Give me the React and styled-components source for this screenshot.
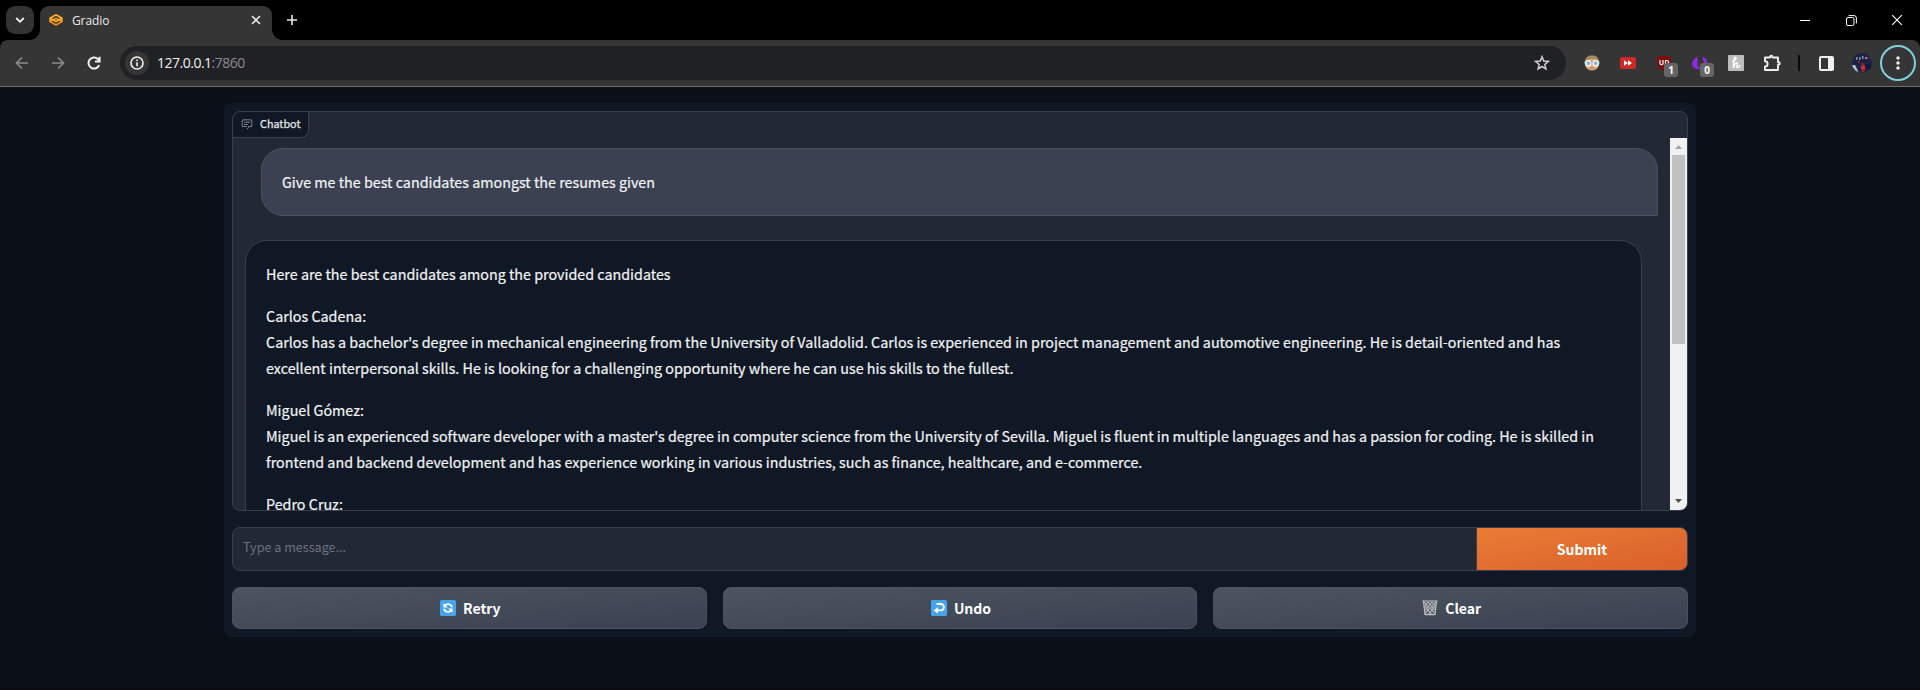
import React from "react";
import styled, { createGlobalStyle } from "styled-components";

const SANS = '"Noto Sans CJK JP", "Noto Sans", sans-serif';
const UI = '"Open Sans", "Noto Sans", sans-serif';

const GlobalStyle = createGlobalStyle`
  * { box-sizing: border-box; }
  html, body { margin: 0; background: #0b0f17; }
  body { overflow: hidden; }
  p { margin: 0; }
  button, input { font: inherit; color: inherit; border: 0; padding: 0; background: none; outline: none; }
`;

const Browser = styled.div`
  height: 690px;
  display: flex;
  flex-direction: column;
  background: #0b0f17;
  border-bottom: 2px solid #080a14;
`;

const TabStrip = styled.header`
  height: 40px;
  display: flex;
  background: #000;
  padding: 6px 0 0 6px;
  flex: none;
`;

const TabSearch = styled.button`
  width: 28px;
  height: 28px;
  border-radius: 9px;
  background: #333;
  display: grid;
  place-items: center;
`;

const Tab = styled.div`
  position: relative;
  width: 232px;
  height: 34px;
  margin-left: 6px;
  padding: 0 11px 6px 9px;
  border-radius: 9px 9px 0 0;
  background: #353535;
  color: #e9e9e9;
  font: 12px/28px ${UI};
  display: flex;
  align-items: center;
  &::before, &::after {
    content: "";
    position: absolute;
    bottom: 0;
    width: 10px;
    height: 10px;
  }
  &::before { left: -10px; background: radial-gradient(circle at 0 0, transparent 9.5px, #353535 10px); }
  &::after { right: -10px; background: radial-gradient(circle at 100% 0, transparent 9.5px, #353535 10px); }
`;

const TabTitle = styled.span`
  flex: 1;
  margin-left: 9px;
  padding-top: 2px;
  letter-spacing: -0.1px;
`;

const NewTab = styled.button`
  width: 28px;
  height: 28px;
  margin-left: 6px;
  display: grid;
  place-items: center;
`;

const WindowControls = styled.div`
  margin-left: auto;
  display: flex;
  height: 28px;
  align-items: center;
`;

const WindowButton = styled.button`
  width: 46px;
  height: 28px;
  display: grid;
  place-items: center;
`;

const Toolbar = styled.div`
  height: 47px;
  display: flex;
  align-items: center;
  background: #353535;
  border-bottom: 1px solid #6f6f6f;
  border-radius: 8px 8px 0 0;
`;

const ToolbarBackdrop = styled.div`
  background: #000;
  flex: none;
`;

const NavButton = styled.button`
  width: 36px;
  height: 36px;
  display: grid;
  place-items: center;
`;

const NavGroup = styled.div`
  display: flex;
  padding-left: 4px;
  width: 120px;
`;

const AddressBar = styled.div`
  width: 1446px;
  height: 34px;
  border-radius: 17px;
  background: #202124;
  display: flex;
  align-items: center;
  padding: 0 16px 0 5px;
  font: 14px/20px ${UI};
  color: #8b8c8e;
`;

const SiteInfo = styled.span`
  width: 24px;
  height: 24px;
  border-radius: 50%;
  background: #353535;
  display: grid;
  place-items: center;
  margin-right: 8px;
`;

const Url = styled.span`
  flex: 1;
  letter-spacing: -0.5px;
  b { font-weight: 400; color: #f1f1f1; }
`;

const Extensions = styled.div`
  display: flex;
  align-items: center;
  margin-left: 8px;
`;

const ExtensionSlot = styled.div`
  position: relative;
  width: 36px;
  height: 36px;
  display: grid;
  place-items: center;
`;

const CountBadge = styled.span`
  position: absolute;
  left: 18px;
  top: 18px;
  width: 14px;
  height: 14px;
  border-radius: 3px;
  background: #666;
  color: #fff;
  font: 700 10px/14px "Noto Sans", sans-serif;
  text-align: center;
`;

const Divider = styled.i`
  width: 2px;
  height: 16px;
  background: #0a0a0a;
  margin: 0 8px;
`;

const MenuButton = styled.button`
  width: 36px;
  height: 36px;
  border-radius: 50%;
  border: 2px solid #80d0e0;
  display: grid;
  place-items: center;
`;

const Page = styled.main`
  flex: 1;
  min-height: 0;
  padding-top: 16px;
  display: flex;
  justify-content: center;
  align-items: flex-start;
  font-family: ${SANS};
`;

const Panel = styled.section`
  width: 1472px;
  height: 534px;
  padding: 8px;
  border-radius: 8px;
  background: #111825;
  display: flex;
  flex-direction: column;
  gap: 16px;
`;

const Chatbot = styled.div`
  height: 400px;
  border: 1px solid #3a414e;
  border-radius: 8px;
  background: #222935;
  overflow: hidden;
  display: flex;
  flex-direction: column;
  flex: none;
`;

const BlockLabel = styled.div`
  width: 76px;
  height: 26px;
  flex: none;
  border: solid #3a414e;
  border-width: 0 1px 1px 0;
  border-radius: 7px 0 8px 0;
  background: #111825;
  color: #e5e7eb;
  display: flex;
  align-items: center;
  padding: 0 0 1px 8px;
  gap: 7px;
  font-size: 10.8px;
  line-height: 16px;
  -webkit-text-stroke: 0.25px currentColor;
`;

const LabelText = styled.span`
  padding-bottom: 2px;
`;

const ScrollArea = styled.div`
  flex: 1;
  min-height: 0;
  display: flex;
`;

const Messages = styled.div`
  flex: 1;
  padding: 10px 12px 0;
  display: flex;
  flex-direction: column;
  gap: 24px;
  overflow: hidden;
`;

const Bubble = styled.div`
  flex: none;
  width: 1397px;
  border: 1px solid ${(p) => (p.$user ? "#4c5360" : "#3a414e")};
  background: ${(p) => (p.$user ? "#3b4150" : "#111825")};
  border-radius: ${(p) => (p.$user ? "22px 22px 0 22px" : "22px 22px 22px 0")};
  align-self: ${(p) => (p.$user ? "flex-end" : "flex-start")};
  padding: 20px;
  color: #f3f4f6;
  font-size: 14.325px;
  line-height: 26px;
  -webkit-text-stroke: 0.2px currentColor;
  display: flex;
  flex-direction: column;
  gap: 16px;
`;

const ScrollTrack = styled.div`
  width: 17px;
  background: #f1f1f1;
  display: flex;
  flex-direction: column;
  align-items: center;
`;

const ScrollArrow = styled.svg`
  width: 17px;
  height: 17px;
  flex: none;
`;

const ScrollThumb = styled.div`
  width: 13px;
  height: 189px;
  background: #c1c1c1;
  margin-bottom: auto;
`;

const Composer = styled.div`
  height: 44px;
  flex: none;
  display: flex;
  border: 1px solid #3a414e;
  border-radius: 8px;
  overflow: hidden;
  background: #222935;
`;

const MessageInput = styled.input`
  flex: 1;
  padding: 0 10px 5px;
  font-size: 12.6px;
  &::placeholder { color: #6b7280; opacity: 1; }
`;

const SubmitButton = styled.button`
  width: 211px;
  border-left: 1px solid #3a414e;
  background: linear-gradient(to bottom right, #ea7b35, #d9602a);
  color: #fff;
  font-size: 14px;
  font-weight: 700;
`;

const Actions = styled.div`
  display: flex;
  gap: 16px;
`;

const ActionButton = styled.button`
  flex: 1;
  height: 42px;
  padding-left: 2px;
  border: 1px solid #4c5360;
  border-radius: 8px;
  background: linear-gradient(to bottom right, #4d5461, #3a4150);
  color: #fff;
  font-size: 14px;
  font-weight: 700;
  display: flex;
  align-items: center;
  justify-content: center;
  gap: 7px;
`;

const GradioLogo = () => (
  <svg width="14" height="14" viewBox="0 0 14 14" fill="none" strokeLinejoin="round" strokeWidth="1.7">
    <path d="M1 8.600 7 12l6-3.400-6-3.400Z" stroke="#f58a1f" />
    <path d="M1 5.200 7 8.600l6-3.400L7 1.800Z" stroke="#fbb62d" />
    <path d="M1 5.500v3M13 5.500v3" stroke="#f79c24" />
  </svg>
);

const Cross = ({ size, width = 1.6, color = "#e6e6e6" }) => (
  <svg width={size} height={size} viewBox="0 0 10 10" stroke={color} strokeWidth={width}>
    <path d="m1 1 8 8M9 1 1 9" />
  </svg>
);

const Arrow = ({ flip }) => (
  <svg width="14" height="14" viewBox="0 0 14 14" fill="none" stroke="#8b8b8b" strokeWidth="1.7">
    <path d={flip ? "M1 7h11M7 1.500 12.500 7 7 12.500" : "M13 7H2M7 1.500 1.500 7 7 12.500"} />
  </svg>
);

const ChatIcon = () => (
  <svg width="12" height="12" viewBox="0 0 32 32" fill="#9ca3af">
    <path d="M17.74 30 16 29l4-7h6a2 2 0 0 0 2-2V8a2 2 0 0 0-2-2H6a2 2 0 0 0-2 2v12a2 2 0 0 0 2 2h9v2H6a4 4 0 0 1-4-4V8a4 4 0 0 1 4-4h20a4 4 0 0 1 4 4v12a4 4 0 0 1-4 4h-4.84Z" />
    <path d="M8 10h16v2H8zM8 16h10v2H8z" />
  </svg>
);

const RetryIcon = () => (
  <svg width="16" height="16" viewBox="0 0 16 16">
    <rect width="16" height="16" rx="1.6" fill="#45a4ec" />
    <g fill="none" stroke="#fff" strokeWidth="1.7">
      <path d="M12 7.2C11.2 3.6 6.6 3.4 5 5.6M4 8.8c.8 3.6 5.4 3.8 7 1.6" />
    </g>
    <path d="M3.4 3v4.400h4.400zM12.600 13V8.600H8.200z" fill="#fff" />
  </svg>
);

const UndoIcon = () => (
  <svg width="16" height="16" viewBox="0 0 16 16">
    <rect width="16" height="16" rx="1.6" fill="#45a4ec" />
    <path d="M5.500 4h4.200a3.100 3.100 0 0 1 0 6.400H5" fill="none" stroke="#fff" strokeWidth="1.9" />
    <path d="M2.600 10.400 6.800 7.200v6.400z" fill="#fff" />
  </svg>
);

const TrashIcon = () => (
  <svg width="16" height="16" viewBox="0 0 16 16" fill="none">
    <path d="M1.400 1.400h13.200L12.900 15H3.100Z" fill="#62666c" />
    <path d="M2 2l5.500 6L3 13.500M6 2l6.500 8M10 2l3 4-7 9M14 2 8.500 8l4.300 5.500M10 2 3.500 10M6 2 3 6l7 9" stroke="#c9cbce" strokeWidth=".9" />
    <path d="M.4 1h15.200M3 14.700h10M1.500 1.500 3.100 15M14.500 1.500 12.900 15" stroke="#bfc2c5" strokeWidth="1.200" />
  </svg>
);

const FaceIcon = () => (
  <svg width="16" height="16" viewBox="0 0 16 16">
    <circle cx="8" cy="8.300" r="7.200" fill="#d9a47c" />
    <path d="M1 7C1 2.500 4 .6 8 .6S15 2.500 15 7l-2-2.500L7 3.500 3 6Z" fill="#a98a60" />
    <path d="M0 6.500h16v2H0z" fill="#6d7f86" />
    <circle cx="4.300" cy="8.300" r="2.700" fill="#8fb6c0" stroke="#f2fafb" strokeWidth="1.300" />
    <circle cx="11.700" cy="8.300" r="2.700" fill="#8fb6c0" stroke="#f2fafb" strokeWidth="1.300" />
    <path d="M6 13.200h4" stroke="#b87a5c" />
  </svg>
);

const ForwardIcon = () => (
  <svg width="16" height="12" viewBox="0 0 16 12">
    <rect width="16" height="12" rx="2.500" fill="#cf2a27" />
    <path d="M4 3.200v5.600L8 6zM8 3.200v5.600L12 6z" fill="#fff" />
  </svg>
);

const ShieldIcon = () => (
  <svg width="16" height="16" viewBox="0 0 16 16">
    <path d="M8 .5 15 2v5c0 4-3 7-7 8.800C4 14 1 11 1 7V2Z" fill="#7d0d0d" />
    <path d="M4 5v3.200a1.500 1.500 0 0 0 3 0V5M9.500 9.500V5.500h1.300a1.700 1.700 0 0 1 0 3.500" fill="none" stroke="#fff" strokeWidth="1.200" />
  </svg>
);

const PurpleIcon = () => (
  <svg width="16" height="16" viewBox="0 0 16 16" fill="#8a2be2">
    <path d="M5.500 1.500v8.500l3 4C4 14.500 0 12.500 0 9c0-3.500 2.500-5 5.500-7.500Z" />
    <path d="M10.500 1.500c3 1.500 5 3.500 5 6.500h-3c-1.500-2-2-4-2-6.500Z" />
  </svg>
);

const HoneyIcon = () => (
  <svg width="16" height="16" viewBox="0 0 16 16">
    <rect width="16" height="16" rx="1" fill="#bdbdbd" />
    <path d="M4 6.500C7 6 9 3 7.500 2.300S5.500 7 5.500 13C6.500 8 9.500 6.500 9.500 8.500S8 13 10 12.500 12 11 12 10" fill="none" stroke="#fff" strokeWidth="1.400" />
  </svg>
);

const PuzzleIcon = () => (
  <svg width="18" height="18" viewBox="0 0 18 18" fill="none" stroke="#f0f0f0" strokeWidth="1.900" strokeLinejoin="round">
    <path d="M2 3.500h5V3a1.200 1.200 0 0 1 2.400 0v.5H15v4.800h.6a1.200 1.200 0 0 1 0 2.400H15V16H2v-3.500a2.600 2.600 0 0 0 0-5.200Z" />
  </svg>
);

const SidePanelIcon = () => (
  <svg width="15" height="15" viewBox="0 0 15 15">
    <rect x="1" y="1" width="13" height="13" rx="1" fill="none" stroke="#f0f0f0" strokeWidth="2" />
    <path d="M9 1h5v13H9z" fill="#f0f0f0" />
  </svg>
);

const Avatar = () => (
  <svg width="20" height="20" viewBox="0 0 20 20">
    <clipPath id="avatar"><circle cx="10" cy="10" r="10" /></clipPath>
    <g clipPath="url(#avatar)">
      <path d="M0 0h20v20H0z" fill="#1a2342" />
      <path d="M0 12h3l4 8H0z" fill="#b8c4d8" />
      <path d="M4 4h1.500v3H4zM7 4h1.500v3H7zM10 3h1.500v3H10zM13 4h2v2h-2z" fill="#8a8aa4" />
      <path d="M6 8h2v2H6zM15 4h2v2h-2zM9.500 10h3v9h-3z" fill="#8f2033" />
      <path d="M13 11h6v5h-6z" fill="#101a38" />
      <circle cx="11" cy="14.500" r="2.300" fill="#cf2a38" />
    </g>
  </svg>
);

const REPLY = [
  ["Here are the best candidates among the provided candidates"],
  [
    "Carlos Cadena:",
    "Carlos has a bachelor's degree in mechanical engineering from the University of Valladolid. Carlos is experienced in project management and automotive engineering. He is detail-oriented and has excellent interpersonal skills. He is looking for a challenging opportunity where he can use his skills to the fullest.",
  ],
  [
    "Miguel Gómez:",
    "Miguel is an experienced software developer with a master's degree in computer science from the University of Sevilla. Miguel is fluent in multiple languages and has a passion for coding. He is skilled in frontend and backend development and has experience working in various industries, such as finance, healthcare, and e-commerce.",
  ],
  ["Pedro Cruz:"],
];

export default function App() {
  return (
    <Browser>
      <GlobalStyle />
      <TabStrip>
        <TabSearch>
          <svg width="10" height="10" viewBox="0 0 10 10" fill="none" stroke="#f0f0f0" strokeWidth="1.800"><path d="m1.200 3 3.800 3.800L8.800 3" /></svg>
        </TabSearch>
        <Tab>
          <GradioLogo />
          <TabTitle>Gradio</TabTitle>
          <Cross size={10} />
        </Tab>
        <NewTab>
          <svg width="12" height="12" viewBox="0 0 12 12" stroke="#e6e6e6" strokeWidth="1.600"><path d="M6 1v10M1 6h10" /></svg>
        </NewTab>
        <WindowControls>
          <WindowButton><svg width="10" height="10" stroke="#fff"><path d="M0 5.500h10" /></svg></WindowButton>
          <WindowButton>
            <svg width="11" height="11" viewBox="0 0 11 11" fill="none" stroke="#fff"><rect x=".5" y="2.500" width="7.500" height="8" rx="1.500" /><path d="M2.500.6H8a2.500 2.500 0 0 1 2.400 2.400v5.500" /></svg>
          </WindowButton>
          <WindowButton><Cross size={12} width={0.9} color="#fff" /></WindowButton>
        </WindowControls>
      </TabStrip>
      <ToolbarBackdrop>
        <Toolbar>
          <NavGroup>
            <NavButton><Arrow /></NavButton>
            <NavButton><Arrow flip /></NavButton>
            <NavButton>
              <svg width="14" height="14" viewBox="0 0 14 14" fill="none" stroke="#f0f0f0" strokeWidth="2"><path d="M12.200 9A5.500 5.500 0 1 1 11 3.200L12.500 5M12.600.8v4.700H8" /></svg>
            </NavButton>
          </NavGroup>
          <AddressBar>
            <SiteInfo>
              <svg width="14" height="14" viewBox="0 0 14 14" fill="none" stroke="#f0f0f0" strokeWidth="1.600"><circle cx="7" cy="7" r="6" /><path d="M7 6.200v4M7 3.500v1.500" /></svg>
            </SiteInfo>
            <Url><b>127.0.0.1</b>:7860</Url>
            <svg width="16" height="16" viewBox="0 0 16 16" fill="none" stroke="#d0d0d0" strokeWidth="1.500"><path d="m8 1.800 1.700 4.300 4.600.3-3.500 3 1.100 4.500L8 11.500l-3.900 2.400 1.100-4.500-3.500-3 4.600-.3Z" /></svg>
          </AddressBar>
          <Extensions>
            <ExtensionSlot><FaceIcon /></ExtensionSlot>
            <ExtensionSlot><ForwardIcon /></ExtensionSlot>
            <ExtensionSlot><ShieldIcon /><CountBadge>1</CountBadge></ExtensionSlot>
            <ExtensionSlot><PurpleIcon /><CountBadge>0</CountBadge></ExtensionSlot>
            <ExtensionSlot><HoneyIcon /></ExtensionSlot>
            <ExtensionSlot><PuzzleIcon /></ExtensionSlot>
            <Divider />
            <ExtensionSlot><SidePanelIcon /></ExtensionSlot>
            <ExtensionSlot><Avatar /></ExtensionSlot>
            <MenuButton>
              <svg width="4" height="16" viewBox="0 0 4 16" fill="#f0f0f0"><circle cx="2" cy="3" r="1.700" /><circle cx="2" cy="8" r="1.700" /><circle cx="2" cy="13" r="1.700" /></svg>
            </MenuButton>
          </Extensions>
        </Toolbar>
      </ToolbarBackdrop>
      <Page>
        <Panel>
          <Chatbot>
            <BlockLabel><ChatIcon /><LabelText>Chatbot</LabelText></BlockLabel>
            <ScrollArea>
              <Messages>
                <Bubble $user><p>Give me the best candidates amongst the resumes given</p></Bubble>
                <Bubble>
                  {REPLY.map((lines) => (
                    <div key={lines[0]}>{lines.map((line) => <p key={line}>{line}</p>)}</div>
                  ))}
                </Bubble>
              </Messages>
              <ScrollTrack>
                <ScrollArrow viewBox="0 0 17 17" fill="#a3a3a3"><path d="M5 11h7L8.500 7z" /></ScrollArrow>
                <ScrollThumb />
                <ScrollArrow viewBox="0 0 17 17" fill="#505050"><path d="M5 6h7l-3.500 4z" /></ScrollArrow>
              </ScrollTrack>
            </ScrollArea>
          </Chatbot>
          <Composer>
            <MessageInput placeholder="Type a message..." />
            <SubmitButton>Submit</SubmitButton>
          </Composer>
          <Actions>
            <ActionButton><RetryIcon />Retry</ActionButton>
            <ActionButton><UndoIcon />Undo</ActionButton>
            <ActionButton><TrashIcon />Clear</ActionButton>
          </Actions>
        </Panel>
      </Page>
    </Browser>
  );
}
